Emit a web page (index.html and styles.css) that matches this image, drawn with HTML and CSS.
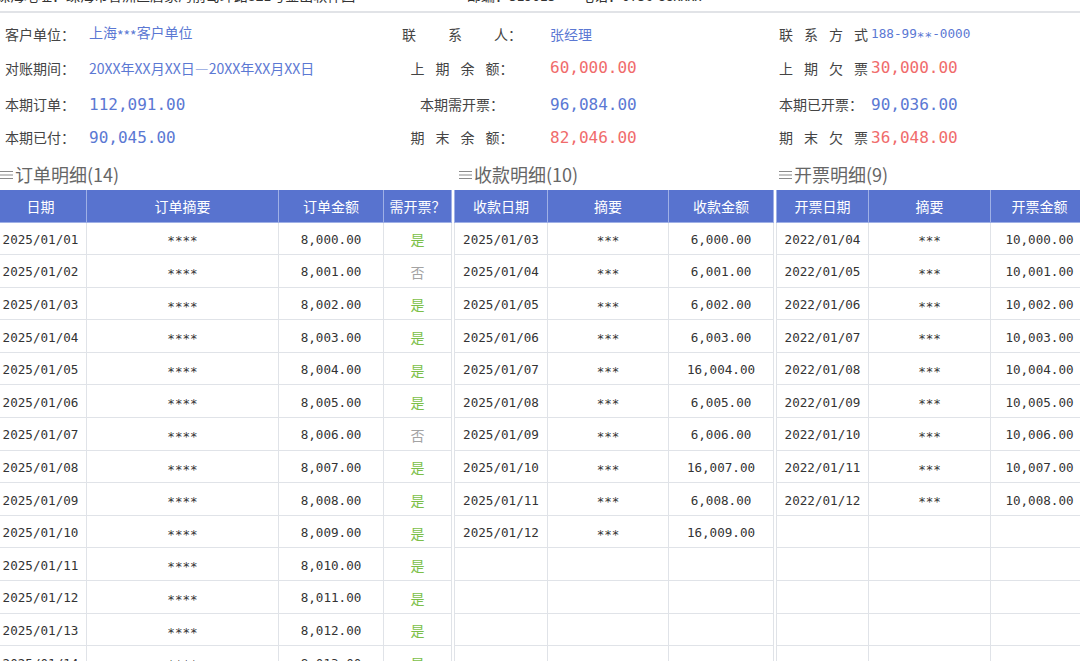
FILE: index.html
```html
<!DOCTYPE html>
<html lang="zh-CN">
<head>
<meta charset="utf-8">
<title>对账单</title>
<link rel="stylesheet" href="styles.css">
</head>
<body>
<div class="page">
  <div class="addr">
    <div class="addr-line">
      <span>珠海地址：珠海市香洲区唐家湾前岛环路321号金山软件园</span>
      <span>邮编：519015</span>
      <span>电话：0756-88xxxx</span>
    </div>
  </div>

  <div class="info">
    <div class="lab">客户单位：</div>
    <div class="val blue">上海<span class="mask">***</span>客户单位</div>
    <div class="lab2"><span class="sp32">联系</span>人：</div>
    <div class="val2 blue">张经理</div>
    <div class="lab3"><span class="sp11">联系方</span>式</div>
    <div class="val3 blue small-num">188-99<span class="mask">**</span>-0000</div>

    <div class="lab">对账期间：</div>
    <div class="val blue period">20XX年XX月XX日—20XX年XX月XX日</div>
    <div class="lab2"><span class="sp11">上期余</span>额：</div>
    <div class="val2 red num">60,000.00</div>
    <div class="lab3"><span class="sp11">上期欠</span>票</div>
    <div class="val3 red num">30,000.00</div>

    <div class="lab">本期订单：</div>
    <div class="val blue num">112,091.00</div>
    <div class="lab2">本期需开票：</div>
    <div class="val2 blue num">96,084.00</div>
    <div class="lab3">本期已开票：</div>
    <div class="val3 blue num">90,036.00</div>

    <div class="lab">本期已付：</div>
    <div class="val blue num">90,045.00</div>
    <div class="lab2"><span class="sp11">期末余</span>额：</div>
    <div class="val2 red num">82,046.00</div>
    <div class="lab3"><span class="sp11">期末欠</span>票</div>
    <div class="val3 red num">36,048.00</div>
  </div>

  <div class="tables">
    <section class="block b1">
      <h2 class="title"><svg class="menu" width="13" height="10" viewBox="0 0 13 10"><path d="M0 1.5H13M0 5H13M0 8.5H13" stroke="#8a8a8a" stroke-width="1.2"/></svg>订单明细(14)</h2>
      <table>
        <colgroup><col style="width:92px"><col style="width:192px"><col style="width:105px"><col style="width:68px"></colgroup>
        <thead><tr><th>日期</th><th>订单摘要</th><th>订单金额</th><th>需开票？</th></tr></thead>
        <tbody>
          <tr><td class="n">2025/01/01</td><td class="n"><span class="mask">****</span></td><td class="n">8,000.00</td><td class="yes">是</td></tr>
          <tr><td class="n">2025/01/02</td><td class="n"><span class="mask">****</span></td><td class="n">8,001.00</td><td class="no">否</td></tr>
          <tr><td class="n">2025/01/03</td><td class="n"><span class="mask">****</span></td><td class="n">8,002.00</td><td class="yes">是</td></tr>
          <tr><td class="n">2025/01/04</td><td class="n"><span class="mask">****</span></td><td class="n">8,003.00</td><td class="yes">是</td></tr>
          <tr><td class="n">2025/01/05</td><td class="n"><span class="mask">****</span></td><td class="n">8,004.00</td><td class="yes">是</td></tr>
          <tr><td class="n">2025/01/06</td><td class="n"><span class="mask">****</span></td><td class="n">8,005.00</td><td class="yes">是</td></tr>
          <tr><td class="n">2025/01/07</td><td class="n"><span class="mask">****</span></td><td class="n">8,006.00</td><td class="no">否</td></tr>
          <tr><td class="n">2025/01/08</td><td class="n"><span class="mask">****</span></td><td class="n">8,007.00</td><td class="yes">是</td></tr>
          <tr><td class="n">2025/01/09</td><td class="n"><span class="mask">****</span></td><td class="n">8,008.00</td><td class="yes">是</td></tr>
          <tr><td class="n">2025/01/10</td><td class="n"><span class="mask">****</span></td><td class="n">8,009.00</td><td class="yes">是</td></tr>
          <tr><td class="n">2025/01/11</td><td class="n"><span class="mask">****</span></td><td class="n">8,010.00</td><td class="yes">是</td></tr>
          <tr><td class="n">2025/01/12</td><td class="n"><span class="mask">****</span></td><td class="n">8,011.00</td><td class="yes">是</td></tr>
          <tr><td class="n">2025/01/13</td><td class="n"><span class="mask">****</span></td><td class="n">8,012.00</td><td class="yes">是</td></tr>
          <tr><td class="n">2025/01/14</td><td class="n"><span class="mask">****</span></td><td class="n">8,013.00</td><td class="yes">是</td></tr>
        </tbody>
      </table>
    </section>

    <section class="block b2">
      <h2 class="title"><svg class="menu" width="13" height="10" viewBox="0 0 13 10"><path d="M0 1.5H13M0 5H13M0 8.5H13" stroke="#8a8a8a" stroke-width="1.2"/></svg>收款明细(10)</h2>
      <table>
        <colgroup><col style="width:93px"><col style="width:121px"><col style="width:105px"></colgroup>
        <thead><tr><th>收款日期</th><th>摘要</th><th>收款金额</th></tr></thead>
        <tbody>
          <tr><td class="n">2025/01/03</td><td class="n"><span class="mask">***</span></td><td class="n">6,000.00</td></tr>
          <tr><td class="n">2025/01/04</td><td class="n"><span class="mask">***</span></td><td class="n">6,001.00</td></tr>
          <tr><td class="n">2025/01/05</td><td class="n"><span class="mask">***</span></td><td class="n">6,002.00</td></tr>
          <tr><td class="n">2025/01/06</td><td class="n"><span class="mask">***</span></td><td class="n">6,003.00</td></tr>
          <tr><td class="n">2025/01/07</td><td class="n"><span class="mask">***</span></td><td class="n">16,004.00</td></tr>
          <tr><td class="n">2025/01/08</td><td class="n"><span class="mask">***</span></td><td class="n">6,005.00</td></tr>
          <tr><td class="n">2025/01/09</td><td class="n"><span class="mask">***</span></td><td class="n">6,006.00</td></tr>
          <tr><td class="n">2025/01/10</td><td class="n"><span class="mask">***</span></td><td class="n">16,007.00</td></tr>
          <tr><td class="n">2025/01/11</td><td class="n"><span class="mask">***</span></td><td class="n">6,008.00</td></tr>
          <tr><td class="n">2025/01/12</td><td class="n"><span class="mask">***</span></td><td class="n">16,009.00</td></tr>
          <tr><td></td><td></td><td></td></tr>
          <tr><td></td><td></td><td></td></tr>
          <tr><td></td><td></td><td></td></tr>
          <tr><td></td><td></td><td></td></tr>
        </tbody>
      </table>
    </section>

    <section class="block b3">
      <h2 class="title"><svg class="menu" width="13" height="10" viewBox="0 0 13 10"><path d="M0 1.5H13M0 5H13M0 8.5H13" stroke="#8a8a8a" stroke-width="1.2"/></svg>开票明细(9)</h2>
      <table>
        <colgroup><col style="width:92px"><col style="width:122px"><col style="width:98px"></colgroup>
        <thead><tr><th>开票日期</th><th>摘要</th><th>开票金额</th></tr></thead>
        <tbody>
          <tr><td class="n">2022/01/04</td><td class="n"><span class="mask">***</span></td><td class="n">10,000.00</td></tr>
          <tr><td class="n">2022/01/05</td><td class="n"><span class="mask">***</span></td><td class="n">10,001.00</td></tr>
          <tr><td class="n">2022/01/06</td><td class="n"><span class="mask">***</span></td><td class="n">10,002.00</td></tr>
          <tr><td class="n">2022/01/07</td><td class="n"><span class="mask">***</span></td><td class="n">10,003.00</td></tr>
          <tr><td class="n">2022/01/08</td><td class="n"><span class="mask">***</span></td><td class="n">10,004.00</td></tr>
          <tr><td class="n">2022/01/09</td><td class="n"><span class="mask">***</span></td><td class="n">10,005.00</td></tr>
          <tr><td class="n">2022/01/10</td><td class="n"><span class="mask">***</span></td><td class="n">10,006.00</td></tr>
          <tr><td class="n">2022/01/11</td><td class="n"><span class="mask">***</span></td><td class="n">10,007.00</td></tr>
          <tr><td class="n">2022/01/12</td><td class="n"><span class="mask">***</span></td><td class="n">10,008.00</td></tr>
          <tr><td></td><td></td><td></td></tr>
          <tr><td></td><td></td><td></td></tr>
          <tr><td></td><td></td><td></td></tr>
          <tr><td></td><td></td><td></td></tr>
          <tr><td></td><td></td><td></td></tr>
        </tbody>
      </table>
    </section>
  </div>
</div>
</body>
</html>
```

FILE: styles.css
```css
* { box-sizing: border-box; }
html, body {
  margin: 0;
  padding: 0;
  background: #fff;
}
body {
  width: 1080px;
  height: 661px;
  overflow: hidden;
  font-family: "Noto Sans CJK SC", "Noto Sans", sans-serif;
  color: #333;
}
.page {
  width: 1080px;
  overflow: hidden;
}

/* address strip */
.addr {
  height: 13px;
  border-bottom: 2px solid #e1e3e7;
  overflow: hidden;
}
.addr-line {
  display: grid;
  grid-template-columns: 471px 113px auto;
  margin-left: -4px;
  margin-top: -15px;
  font-size: 14px;
  line-height: 20px;
  color: #333;
  white-space: nowrap;
}

/* info block */
.info {
  display: grid;
  grid-template-columns: 84px 313px 120px 257px 92px 1fr;
  grid-template-rows: 34px 33px 40px 26px;
  align-items: center;
  padding-left: 5px;
  margin-top: 4px;
  font-size: 14px;
  white-space: nowrap;
}
.lab, .lab2, .lab3 { color: #444; }
.lab2 { text-align: center; }
.val2 { padding-left: 28px; }
.sp11 { letter-spacing: 11px; }
.sp32 { letter-spacing: 32px; }
.blue { color: #5b78d3; }
.red { color: #f06b6b; }
.num {
  font-family: "DejaVu Sans Mono", monospace;
  font-size: 16px;
}
.small-num {
  font-family: "DejaVu Sans Mono", monospace;
  font-size: 12.7px;
  padding-top: 1px;
}
.period { font-size: 14px; }
.mask {
  vertical-align: -0.22em;
}

/* tables */
.tables {
  display: flex;
  gap: 3px;
  margin-left: -6px;
  width: 1094px;
}
.block { flex: none; }
.b1 { width: 457px; }
.b2 { width: 319px; }
.b3 { width: 312px; }
.title {
  margin: 0;
  height: 40px;
  padding-top: 8px;
  display: flex;
  align-items: center;
  gap: 2px;
  font-size: 18px;
  font-weight: normal;
  line-height: 32px;
  color: #666;
  white-space: nowrap;
}
.b1 .title { padding-left: 6px; }
.b2 .title { padding-left: 5px; }
.b3 .title { padding-left: 3px; }
.menu { flex: none; margin-top: 1px; }

table {
  width: 100%;
  border-collapse: collapse;
  table-layout: fixed;
}
th {
  height: 32px;
  background: #5873cf;
  color: #fff;
  font-size: 14px;
  font-weight: normal;
  text-align: center;
  border: 1px solid #9fb0e6;
  border-top: none;
  padding: 0;
}
td {
  height: 32.6px;
  border: 1px solid #e0e3e8;
  text-align: center;
  padding: 2px 0 0;
  font-size: 14px;
  white-space: nowrap;
}
td.n {
  font-family: "DejaVu Sans Mono", monospace;
  font-size: 12.6px;
  color: #333;
}
td.yes { color: #7cbf48; }
td.no { color: #a3a3a3; }
```
